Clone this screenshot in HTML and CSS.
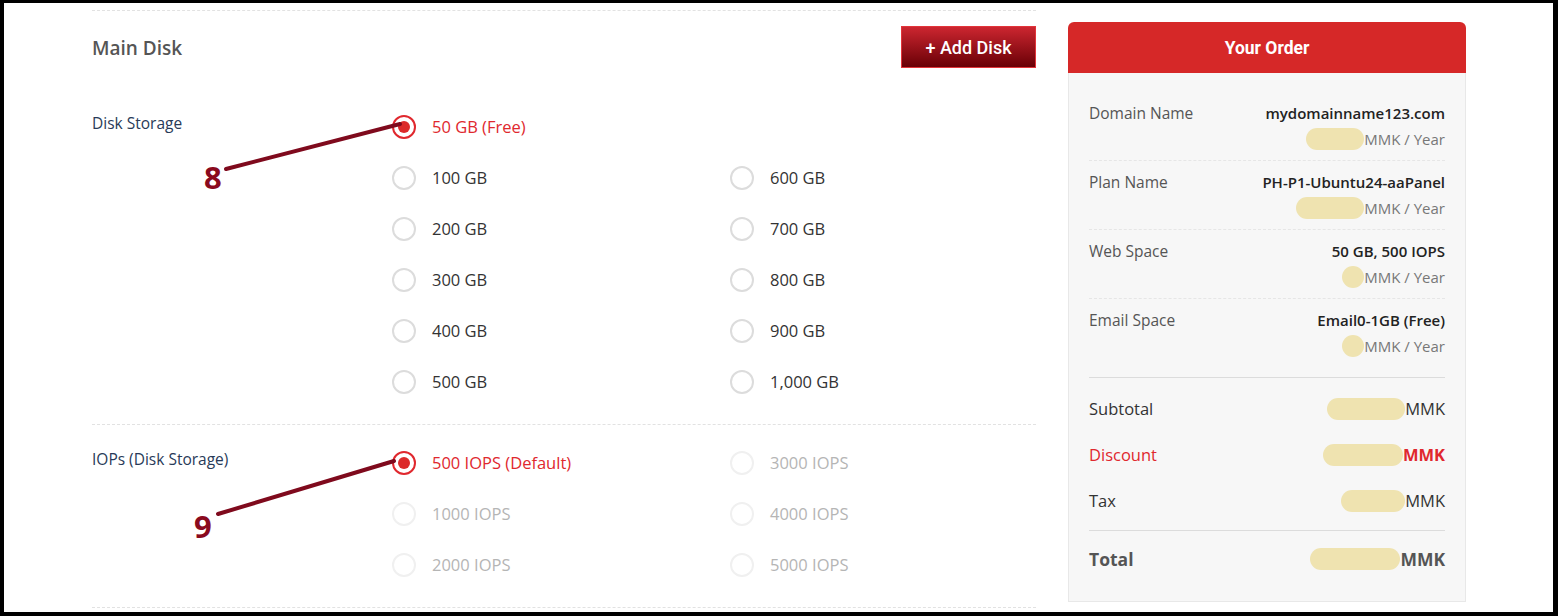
FILE: index.html
```html
<!DOCTYPE html>
<html lang="en">
<head>
    <meta charset="UTF-8">
    <meta name="viewport" content="width=device-width, initial-scale=1.0">
    <title>Order - Disk Options</title>
    <link rel="stylesheet" href="styles.css">
</head>
<body>
    <div class="screen">
        <div class="main">
            <!-- Main disk header -->
            <div class="disk-head">
                <h3 class="disk-title">Main Disk</h3>
                <button class="add-btn">+ Add Disk</button>
            </div>

            <!-- Disk storage options -->
            <div class="option-row">
                <div class="option-label">Disk Storage</div>
                <div class="option-grid">
                    <label class="radio checked"><span class="dot"></span>50 GB (Free)</label>
                    <span></span>
                    <label class="radio"><span class="dot"></span>100 GB</label>
                    <label class="radio"><span class="dot"></span>600 GB</label>
                    <label class="radio"><span class="dot"></span>200 GB</label>
                    <label class="radio"><span class="dot"></span>700 GB</label>
                    <label class="radio"><span class="dot"></span>300 GB</label>
                    <label class="radio"><span class="dot"></span>800 GB</label>
                    <label class="radio"><span class="dot"></span>400 GB</label>
                    <label class="radio"><span class="dot"></span>900 GB</label>
                    <label class="radio"><span class="dot"></span>500 GB</label>
                    <label class="radio"><span class="dot"></span>1,000 GB</label>
                </div>
            </div>

            <!-- IOPS options -->
            <div class="option-row iops">
                <div class="option-label">IOPs (Disk Storage)</div>
                <div class="option-grid">
                    <label class="radio checked"><span class="dot"></span>500 IOPS (Default)</label>
                    <label class="radio disabled"><span class="dot"></span>3000 IOPS</label>
                    <label class="radio disabled"><span class="dot"></span>1000 IOPS</label>
                    <label class="radio disabled"><span class="dot"></span>4000 IOPS</label>
                    <label class="radio disabled"><span class="dot"></span>2000 IOPS</label>
                    <label class="radio disabled"><span class="dot"></span>5000 IOPS</label>
                </div>
            </div>
        </div>

        <!-- Order summary -->
        <div class="order">
            <div class="order-header">Your Order</div>
            <div class="order-body">
                <div class="order-item">
                    <div class="item-line"><span class="item-name">Domain Name</span><span class="item-value">mydomainname123.com</span></div>
                    <div class="item-price"><span class="blob" style="width:58px"></span>MMK / Year</div>
                </div>
                <div class="order-item">
                    <div class="item-line"><span class="item-name">Plan Name</span><span class="item-value">PH-P1-Ubuntu24-aaPanel</span></div>
                    <div class="item-price"><span class="blob" style="width:68px"></span>MMK / Year</div>
                </div>
                <div class="order-item">
                    <div class="item-line"><span class="item-name">Web Space</span><span class="item-value">50 GB, 500 IOPS</span></div>
                    <div class="item-price"><span class="blob" style="width:22px"></span>MMK / Year</div>
                </div>
                <div class="order-item">
                    <div class="item-line"><span class="item-name">Email Space</span><span class="item-value">Email0-1GB (Free)</span></div>
                    <div class="item-price"><span class="blob" style="width:22px"></span>MMK / Year</div>
                </div>

                <div class="totals">
                    <div class="total-line"><span>Subtotal</span><span class="amount"><span class="blob" style="width:78px"></span>MMK</span></div>
                    <div class="total-line discount"><span>Discount</span><span class="amount strong"><span class="blob" style="width:80px"></span>MMK</span></div>
                    <div class="total-line"><span>Tax</span><span class="amount"><span class="blob" style="width:64px"></span>MMK</span></div>
                </div>
                <div class="grand-total"><span>Total</span><span class="amount"><span class="blob" style="width:90px"></span>MMK</span></div>
            </div>
        </div>

        <!-- step markers -->
        <svg class="marks" width="1549" height="609">
            <line x1="222" y1="166" x2="396" y2="121" />
            <line x1="214" y1="511" x2="390" y2="458" />
        </svg>
        <span class="mark mark-8">8</span>
        <span class="mark mark-9">9</span>
    </div>
</body>
</html>
```

FILE: styles.css
```css
body{
    margin: 0;
    background: #000;
    font-family: "Open Sans", "Noto Sans", sans-serif;
}

.screen{
    position: relative;
    margin: 3px 5px 4px 4px;
    height: 609px;
    background: #fff;
    overflow: hidden;
    display: flex;
    gap: 32px;
    padding-left: 88px;
    box-sizing: border-box;
}

/* Left column */
.main{
    width: 944px;
    flex-shrink: 0;
    margin-top: 7px;
    border-top: 1px dashed #e2e2e2;
}

.disk-head{
    display: flex;
    justify-content: space-between;
    align-items: center;
    padding-top: 15px;
}

.disk-title{
    margin: 0;
    padding-top: 2px;
    font-size: 19px;
    font-weight: 600;
    color: #555;
}

.add-btn{
    width: 135px;
    height: 42px;
    border: 1px solid #e2343a;
    background: linear-gradient(to bottom, #cc2630, #690006);
    color: #fff;
    font-family: "Roboto", sans-serif;
    font-size: 18px;
    font-weight: 500;
    cursor: pointer;
}

.option-row{
    display: flex;
    padding: 33px 0 17px;
    border-bottom: 1px dashed #e2e2e2;
}

.option-row.iops{
    padding-top: 12px;
}

.option-label{
    width: 300px;
    flex-shrink: 0;
    padding-top: 12px;
    font-size: 15.5px;
    line-height: 20px;
    color: #283a58;
}

.option-grid{
    flex: 1;
    display: grid;
    grid-template-columns: 338px 1fr;
    grid-auto-rows: 51px;
}

.radio{
    display: flex;
    align-items: center;
    gap: 16px;
    font-size: 16.5px;
    color: #333;
}

.dot{
    width: 20px;
    height: 20px;
    border: 2px solid #dcdcdc;
    border-radius: 50%;
    display: flex;
    align-items: center;
    justify-content: center;
}

.radio.checked{
    color: #e0282e;
}

.radio.checked .dot{
    border-color: #e0282e;
}

.radio.checked .dot::after{
    content: "";
    width: 12px;
    height: 12px;
    border-radius: 50%;
    background: #dc2a2a;
}

.radio.disabled{
    color: #b5b5b5;
}

.radio.disabled .dot{
    border-color: #f0f0f0;
}

/* Order card */
.order{
    width: 398px;
    flex-shrink: 0;
    margin-top: 19px;
}

.order-header{
    height: 51px;
    line-height: 53px;
    text-align: center;
    background: #d62828;
    color: #fff;
    border-radius: 6px 6px 0 0;
    font-family: "Roboto", sans-serif;
    font-weight: 700;
    font-size: 17.5px;
}

.order-body{
    background: #f7f7f7;
    border: 1px solid #e8e8e8;
    border-top: none;
    padding: 19px 20px 31px;
}

.order-item{
    padding: 10px 0;
    border-bottom: 1px dashed #e6e6e6;
}

.order-item:nth-child(4){
    border-bottom: none;
}

.item-line{
    display: flex;
    justify-content: space-between;
    height: 22px;
    line-height: 22px;
    font-size: 15px;
}

.item-name{
    color: #555;
    font-size: 15.5px;
}

.item-value{
    color: #222;
    font-weight: 600;
}

.item-price{
    margin-top: 4px;
    height: 22px;
    display: flex;
    justify-content: flex-end;
    align-items: center;
    line-height: 22px;
    font-size: 15px;
    color: #777;
}

.blob{
    display: inline-block;
    height: 22px;
    background: #efe3b0;
    border-radius: 11px;
}

.amount{
    display: flex;
    align-items: center;
}

.totals{
    margin-top: 10px;
    border-top: 1px solid #dcdcdc;
    border-bottom: 1px solid #dcdcdc;
    padding: 8px 0 6px;
}

.total-line{
    display: flex;
    justify-content: space-between;
    padding: 12px 0;
    height: 22px;
    line-height: 22px;
    font-size: 16.5px;
    color: #333;
}

.total-line.discount{
    color: #e0282e;
}

.strong{
    font-weight: 700;
}

.grand-total{
    display: flex;
    justify-content: space-between;
    padding-top: 17px;
    height: 22px;
    line-height: 22px;
    font-size: 17.5px;
    font-weight: 700;
    color: #555;
}

/* Step markers over the form */
.marks{
    position: absolute;
    left: 0;
    top: 0;
    pointer-events: none;
}

.marks line{
    stroke: #7f0a1d;
    stroke-width: 4;
    stroke-linecap: round;
}

.mark{
    position: absolute;
    font-family: "Open Sans", sans-serif;
    font-weight: 700;
    font-size: 31px;
    line-height: 30px;
    color: #8a0a1e;
}

.mark-8{
    left: 200px;
    top: 159px;
}

.mark-9{
    left: 190px;
    top: 508px;
}
```
